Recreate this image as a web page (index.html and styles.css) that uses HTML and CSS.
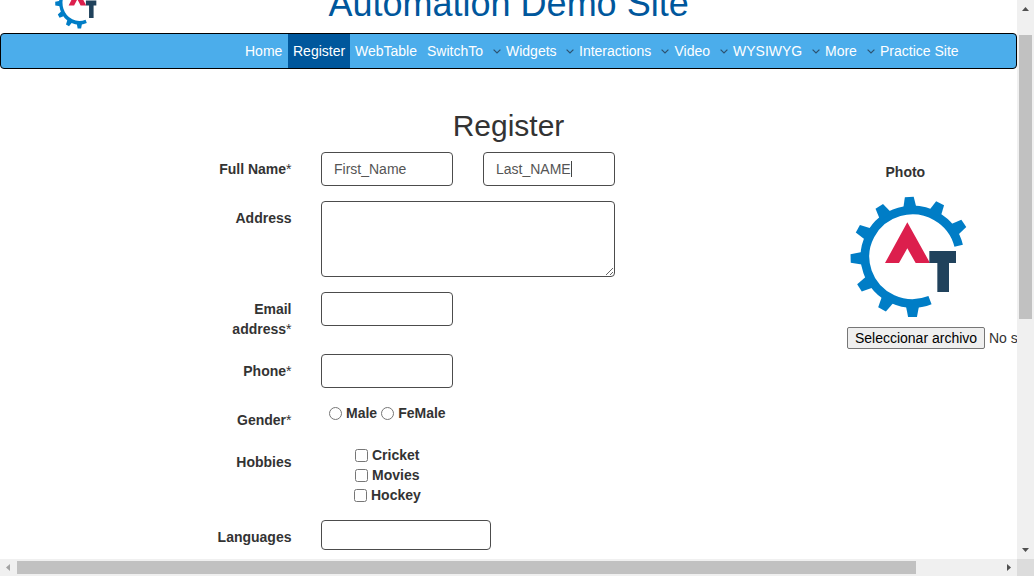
FILE: index.html
```
<!DOCTYPE html>
<html lang="en">
<head>
<meta charset="utf-8">
<title>Register</title>
<link rel="stylesheet" href="styles.css">
</head>
<body>
<svg width="0" height="0" class="defs">
  <symbol id="logo" viewBox="60 138 354 366" preserveAspectRatio="none">
    <path d="M300 450.3A142.5 140 0 1 1 386 287.5" fill="none" stroke="#007dc6" stroke-width="26"/>
    <g fill="#007dc6" transform="translate(247.5 321) scale(1.02 .99)">
      <path id="tooth" d="M145-20L182-13V13L145 20Z" transform="rotate(90)"/>
      <use href="#tooth" transform="rotate(29.5)"/>
      <use href="#tooth" transform="rotate(59)"/>
      <use href="#tooth" transform="rotate(88.5)"/>
      <use href="#tooth" transform="rotate(118)"/>
      <use href="#tooth" transform="rotate(147.5)"/>
      <use href="#tooth" transform="rotate(177)"/>
      <use href="#tooth" transform="rotate(206.5)"/>
      <use href="#tooth" transform="rotate(236)"/>
    </g>
    <path d="M232 217L300 339H257L232 295L207 339H165Z" fill="#dc1f4d"/>
    <path d="M298 303H378V339H357V426H322V339H298Z" fill="#20425c"/>
  </symbol>
  <symbol id="chev" viewBox="0 0 8 5"><path d="M.6.6L4 4L7.4.6" fill="none" stroke="#2d5270" stroke-width="1.2"/></symbol>
</svg>
<div class="page">
  <header class="header">
    <svg class="brand"><use href="#logo"/></svg>
    <h1>Automation Demo Site</h1>
  </header>
  <nav class="nav">
    <a class="home">Home</a>
    <a class="register">Register</a>
    <a class="webtable">WebTable</a>
    <a class="switchto">SwitchTo <svg><use href="#chev"/></svg></a>
    <a class="widgets">Widgets <svg><use href="#chev"/></svg></a>
    <a class="interactions">Interactions <svg><use href="#chev"/></svg></a>
    <a class="video">Video <svg><use href="#chev"/></svg></a>
    <a class="wysiwyg">WYSIWYG <svg><use href="#chev"/></svg></a>
    <a class="more">More <svg><use href="#chev"/></svg></a>
    <a>Practice Site</a>
  </nav>
  <h2>Register</h2>
  <main class="main">
    <form class="form">
      <div class="row">
        <label>Full Name<i>*</i></label>
        <div class="names">
          <div class="field">First_Name</div>
          <div class="field">Last_NAME<span class="caret"></span></div>
        </div>
      </div>
      <div class="row"><label>Address</label><textarea></textarea></div>
      <div class="row email"><label>Email address<i>*</i></label><div class="field"></div></div>
      <div class="row"><label>Phone<i>*</i></label><div class="field"></div></div>
      <div class="row gender">
        <label>Gender<i>*</i></label>
        <div class="radios">
          <input type="radio" name="g"><b>Male</b>
          <input type="radio" name="g"><b>FeMale</b>
        </div>
      </div>
      <div class="row hobbies">
        <label>Hobbies</label>
        <div class="checks">
          <div><input type="checkbox"><b>Cricket</b></div>
          <div><input type="checkbox"><b>Movies</b></div>
          <div class="last"><input type="checkbox"><b>Hockey</b></div>
        </div>
      </div>
      <div class="row"><label>Languages</label><div class="field lang"></div></div>
    </form>
    <aside class="photo">
      <b>Photo</b>
      <svg><use href="#logo"/></svg>
      <div class="file"><button type="button">Seleccionar archivo</button><span>No se eligió ningún archivo</span></div>
    </aside>
  </main>
</div>
<div class="vbar">
  <svg width="7" height="4"><path d="M0 4L3.5 0L7 4Z" fill="#505050"/></svg>
  <div class="vthumb"></div>
  <svg width="7" height="4"><path d="M0 0L3.5 4L7 0Z" fill="#505050"/></svg>
</div>
<div class="hbar">
  <svg width="4" height="7"><path d="M4 0L0 3.5L4 7Z" fill="#a3a3a3"/></svg>
  <div class="hthumb"></div>
  <svg width="4" height="7"><path d="M0 0L4 3.5L0 7Z" fill="#505050"/></svg>
</div>
<div class="corner"></div>
</body>
</html>
```
FILE: styles.css
```
* { box-sizing: border-box; }
body {
  margin: 0;
  width: 1034px;
  height: 576px;
  overflow: hidden;
  display: grid;
  grid-template: 559px 17px / 1017px 17px;
  font: 14px/20px "Liberation Sans", Arial, sans-serif;
  color: #333;
  background: #fff;
}
.defs { position: absolute; }
.page { overflow: hidden; }
.header { height: 33px; display: flex; align-items: flex-start; padding-left: 55px; }
.brand { width: 46px; height: 52px; margin-top: -23px; flex: none; }
h1 {
  margin: -16px 0 0 227.5px;
  font-size: 36px;
  line-height: 40px;
  font-weight: 400;
  color: #00579c;
  white-space: nowrap;
}
.nav {
  height: 36px;
  display: flex;
  padding-left: 239px;
  border: 1px solid #000;
  border-radius: 4px;
  background: #4badeb;
  color: #fff;
}
.nav a {
  display: flex;
  align-items: center;
  justify-content: space-between;
  padding: 0 .5px 0 5px;
  white-space: nowrap;
}
.nav svg { width: 8px; height: 5px; }
.nav .home { width: 48px; }
.nav .register { width: 62px; background: #00579c; }
.nav .webtable { width: 72px; }
.nav .switchto { width: 79px; }
.nav .widgets { width: 73px; }
.nav .interactions { width: 95.5px; }
.nav .video { width: 58.5px; }
.nav .wysiwyg { width: 92px; }
.nav .more { width: 55px; }
h2 { margin: 40px 0 0; text-align: center; font-size: 30px; line-height: 33px; font-weight: 400; }
.main { display: flex; margin-top: 10px; }
.form { width: 399px; margin-left: 216px; flex: none; display: flex; flex-direction: column; gap: 15px; }
.row { display: grid; grid-template-columns: 75.5px 294px; column-gap: 29.5px; align-items: start; }
.row label { padding-top: 7px; text-align: right; font-weight: 700; white-space: nowrap; }
.row i { font-style: normal; font-weight: 400; }
.names { display: flex; gap: 30px; }
.field {
  width: 132px;
  height: 34px;
  display: flex;
  align-items: center;
  padding: 0 12px;
  border: 1px solid #4c4c4c;
  border-radius: 4px;
  color: #555;
}
.caret { width: 1px; height: 16px; background: #444; }
textarea { display: block; width: 294px; height: 76px; margin: 0; border: 1px solid #4c4c4c; border-radius: 4px; }
.email label { white-space: normal; }
.gender { height: 27px; }
.hobbies { height: 60px; }
.radios { display: flex; align-items: center; height: 20px; padding-left: 8px; }
input { width: 13px; height: 13px; margin: 0 4px 0 0; }
.radios b { margin-right: 4px; }
.checks { padding-left: 34px; }
.checks div { display: flex; align-items: center; height: 20px; }
.checks .last { margin-left: -1px; }
.lang { width: 170px; height: 30px; }
.photo { margin: 10px 0 0 232px; width: 170px; flex: none; display: flex; flex-direction: column; }
.photo > b { margin-left: 38.5px; }
.photo > svg { width: 118px; height: 122px; margin: 14px 0 9px 3px; }
.file { display: flex; align-items: center; gap: 4px; white-space: nowrap; }
button {
  width: 138px;
  height: 22px;
  flex: none;
  padding: 0;
  border: 1px solid #767676;
  border-radius: 2px;
  background: #efefef;
  color: #000;
  font: inherit;
}
.vbar { background: #f0f0f0; display: flex; flex-direction: column; align-items: center; padding: 7px 0; }
.vthumb { width: 13px; height: 284px; margin: 24px 0 auto; background: #c1c1c1; }
.hbar { background: #f0f0f0; display: flex; align-items: center; padding: 0 6px; }
.hthumb { width: 899px; height: 13px; margin: 0 auto 0 7px; background: #c1c1c1; }
.corner { background: #dcdcdc; }
```
